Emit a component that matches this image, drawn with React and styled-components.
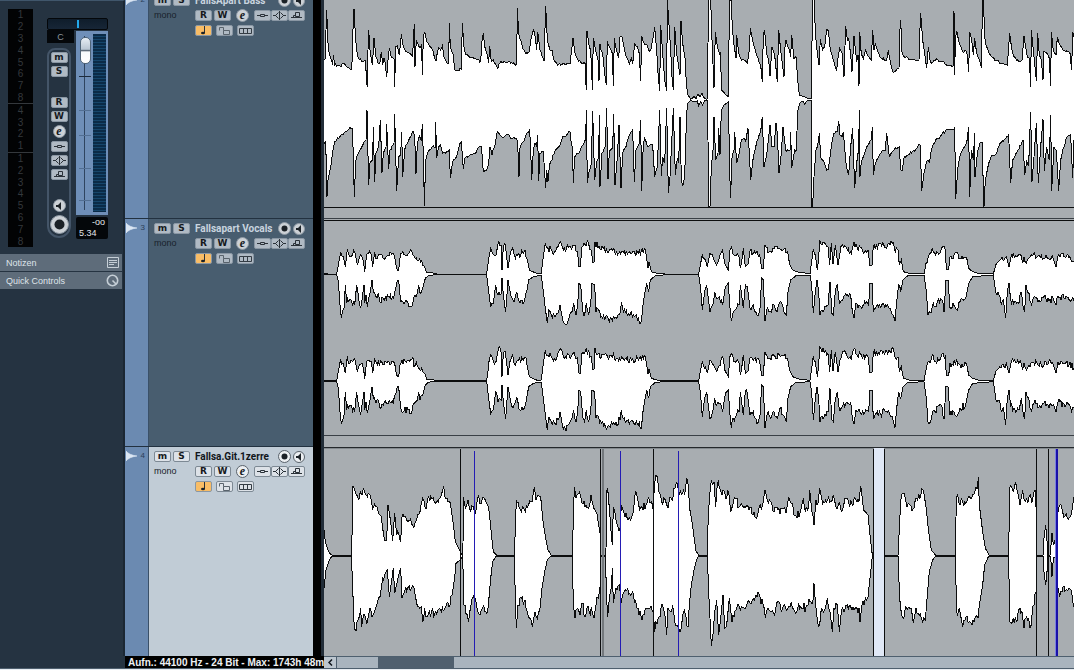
import React from "react";
import styled, { createGlobalStyle, css } from "styled-components";

const GlobalStyle = createGlobalStyle`
  * {
    box-sizing: border-box;
  }
  html, body, #root {
    height: 100%;
  }
  body {
    margin: 0;
    background: #e8edf2;
    font-family: "Liberation Sans", Arial, sans-serif;
    overflow: hidden;
  }
`;

const Window = styled.div`
  display: flex;
  flex-direction: column;
  height: 100vh;
  padding-bottom: 1px;
`;

const Workspace = styled.div`
  flex: 1;
  min-height: 0;
  display: flex;
`;

/* inspector */

const Inspector = styled.aside`
  flex: none;
  width: 125px;
  background: #253341;
  border-top: 1px solid #40566b;
  border-right: 2px solid #1b2733;
`;

const ChannelStrip = styled.section`
  display: flex;
  align-items: flex-start;
  height: 253px;
  padding: 8px 15px 0 8px;
  gap: 14px;
`;

const LevelScale = styled.div`
  width: 25px;
  height: 238px;
  background: #020304;
  display: flex;
  flex-direction: column;
`;

const ScaleGroup = styled.div`
  flex: ${(props) => props.$marks} 0 0;
  display: flex;
  flex-direction: column;
  justify-content: space-around;
  color: #34383c;
  font-size: 10px;
  line-height: 11px;
  text-align: center;

  & + & {
    border-top: 1px solid #34383c;
  }
`;

const StripBody = styled.div`
  flex: 1;
  padding-top: 9px;
`;

const Pan = styled.div`
  display: flex;
  justify-content: center;
  height: 12px;
  padding: 1px;
  background: linear-gradient(#0f1d2b, #172637);
  border: 1px solid #04070a;
  border-radius: 2px;
`;

const PanMark = styled.div`
  width: 2px;
  background: #22a8ea;
`;

const PanValue = styled.div`
  width: 27px;
  height: 13px;
  margin-bottom: 5px;
  background: #04070a;
  color: #8a939c;
  font-size: 9px;
  line-height: 14px;
  text-align: center;
`;

const StripColumns = styled.div`
  display: grid;
  grid-template-columns: 24px 32px;
  justify-content: space-between;
`;

const StripButtons = styled.div`
  display: flex;
  flex-direction: column;
  align-items: center;
  gap: 3px;
  height: 190px;
  padding: 2px 0;
  border: 2px solid #445568;
  border-radius: 8px 8px 12px 12px;
`;

const Spacer = styled.div`
  flex: 1;
`;

const FaderColumn = styled.div`
  margin-top: -17px;
`;

const FaderBox = styled.div`
  display: flex;
  justify-content: space-between;
  height: 184px;
  padding: 3px 2px 3px 3px;
  background: #6f8fb8;
  margin-bottom: 2px;
`;

const Fader = styled.input`
  appearance: none;
  writing-mode: vertical-lr;
  direction: rtl;
  width: 12px;
  height: 174px;
  margin: 2px 0 0;
  background:
    linear-gradient(#1d2b3b, #1d2b3b) 0 40px / 12px 1px no-repeat,
    linear-gradient(#526f93, #526f93) 0 74px / 12px 1px no-repeat,
    linear-gradient(#526f93, #526f93) 0 99px / 12px 1px no-repeat,
    linear-gradient(#526f93, #526f93) 0 132px / 12px 1px no-repeat,
    linear-gradient(#526f93, #526f93) 0 164px / 12px 1px no-repeat,
    linear-gradient(#2f4560, #2f4560) 5px 0 / 1px 100% no-repeat;

  &::-webkit-slider-thumb {
    appearance: none;
    width: 11px;
    height: 27px;
    border: 1px solid #4f6478;
    border-radius: 5px;
    background: linear-gradient(#e6edf4, #b9c6d3 45%, #5c6b7a 50%, #f6fafd 56%, #fff);
  }
`;

const Meter = styled.div`
  width: 13px;
  height: 178px;
  background: repeating-linear-gradient(#0b2b47 0 2px, #16466b 2px 3px);
`;

const Readout = styled.div`
  height: 22px;
  padding: 0 3px;
  background: #04070a;
  border-radius: 2px;
  color: #e3e6e9;
  font-size: 9px;
  line-height: 11px;
`;

const Peak = styled.div`
  text-align: right;
`;

const SectionButton = styled.button`
  display: flex;
  align-items: center;
  justify-content: space-between;
  width: 122px;
  height: 17px;
  margin-bottom: 1px;
  padding: 0 3px 0 6px;
  border: 0;
  background: #5e6c7a;
  color: #dfe5ea;
  font: 9px "Liberation Sans", Arial, sans-serif;
`;

/* small channel buttons */

const KeyButton = styled.button`
  flex: none;
  display: flex;
  align-items: center;
  justify-content: center;
  width: 17px;
  height: 11px;
  padding: 0;
  border: 1px solid ${(props) => (props.$bright ? "#7d8994" : "#8a97a4")};
  border-radius: 2px;
  background: ${(props) =>
    props.$on ? "#f9bd66" : props.$bright ? "#dde2e8" : "#b0bac4"};
  color: #15191d;
  font: bold 9px/9px "DejaVu Sans", sans-serif;

  ${(props) =>
    props.$round &&
    css`
      width: ${props.$size}px;
      height: ${props.$size}px;
      border-radius: 50%;
      background: ${props.$bright ? "#eceff2" : "#ccd1d6"};
      border-color: ${props.$bright ? "#59626b" : "#8f9aa5"};
      font: italic bold 12px/10px "Liberation Serif", serif;
    `}
`;

/* track list */

const TrackList = styled.div`
  flex: none;
  width: 199px;
  overflow: hidden;
  background: #000;
  border-right: 3px solid #222d38;
  padding-right: 8px;
`;

const Scrolled = styled.div`
  margin-top: -10px;
`;

const TrackRow = styled.div`
  display: flex;
  height: 228px;
  border-top: 1px solid #223140;
`;

const TrackTab = styled.div`
  flex: none;
  display: flex;
  align-items: flex-start;
  justify-content: space-between;
  width: 24px;
  padding: 4px 3px 0 1px;
  background: #6b8ab1;
  border-right: 1px solid #3a5068;
  color: #2b4059;
  font-size: 8px;
  line-height: 10px;
`;

const TrackBody = styled.div`
  flex: 1;
  padding: 3px 8px 0 5px;
  background: ${(props) => (props.$selected ? "#c1ccd6" : "#485d6f")};
  color: ${(props) => (props.$selected ? "#11161b" : "#c9d4df")};
`;

const TrackLine = styled.div`
  display: grid;
  grid-template-columns: 17px 17px 1fr 13px 12px;
  column-gap: 2px;
  align-items: center;
  height: 12px;
  margin-bottom: 3px;
`;

const TrackName = styled.span`
  padding-left: 3px;
  font: bold 10px/12px Roboto, sans-serif;
  white-space: nowrap;
`;

const ControlLine = styled.div`
  display: flex;
  align-items: center;
  gap: ${(props) => props.$gap}px;
  height: 12px;
  margin-bottom: 3px;
  padding-left: ${(props) => (props.$indent ? 41 : 0)}px;
`;

const ChannelMode = styled.span`
  width: 39px;
  color: #18222c;
  font-size: 9px;
  line-height: 14px;
`;

const EditKeys = styled.div`
  flex: 1;
  display: flex;
  justify-content: center;
`;

const JoinedKeys = styled.div`
  display: flex;
`;

/* arrangement */

const Arrangement = styled.main`
  flex: 1;
  min-width: 0;
  overflow: hidden;
  background: #a8adb1;
`;

const Lane = styled.svg`
  display: block;
  width: 750px;
  height: 228px;
`;

/* footer */

const Footer = styled.footer`
  flex: none;
  display: flex;
  height: 13px;
  border-bottom: 1px solid #4e5f6e;
  background: #253341;
`;

const StatusText = styled.div`
  flex: none;
  width: 199px;
  margin-left: 125px;
  padding-left: 3px;
  overflow: hidden;
  background: #000;
  color: #eef1f4;
  font: bold 10px/13px "Liberation Sans", Arial, sans-serif;
  white-space: nowrap;
`;

const Scrollbar = styled.div`
  flex: 1;
  display: flex;
  border-top: 1px solid #4e5f6e;
  background: #a9b4be;
`;

const ScrollArrow = styled.button`
  display: flex;
  align-items: center;
  justify-content: center;
  width: 13px;
  margin-right: 41px;
  padding: 0;
  border: 0;
  border-right: 1px solid #4e5f6e;
  background: #bcc6cf;
`;

const ScrollThumb = styled.div`
  width: 76px;
  background: #50606f;
`;

/* icons */

const Icon = ({ size = 13, height = 9, children }) => (
  <svg
    width={size}
    height={height}
    viewBox={`0 0 ${size} ${height}`}
    fill="none"
    stroke="#2a3138"
    strokeWidth="1"
    aria-hidden="true"
  >
    {children}
  </svg>
);

const InsertIcon = () => (
  <Icon>
    <path d="M1 4.500h3M9 4.500h3M4.500 3.500h4v2h-4z" />
  </Icon>
);

const EqIcon = () => (
  <Icon>
    <path d="M0 4.500h3M10 4.500h3M5.500 1.500l-3 3 3 3M7.500 1.500l3 3-3 3M6.500 0v9" />
  </Icon>
);

const SendIcon = () => (
  <Icon>
    <path d="M1 6.500h11M3.500 6.500v-2h2M5.500 5.500v-4h4v4z" />
  </Icon>
);

const NoteIcon = () => (
  <Icon>
    <path d="M7.500 0v7" />
    <ellipse cx="6" cy="7" rx="2" ry="1.300" fill="#1b2126" stroke="none" />
  </Icon>
);

const LockIcon = () => (
  <Icon>
    <path d="M5.500 4.500h6v4h-6zM5.500 4.500v-3h-4v3" stroke="#59636c" />
  </Icon>
);

const LanesIcon = () => (
  <Icon>
    <path d="M.5 2.500h12v5H.5zM4.500 2.500v5M8.500 2.500v5" stroke="#343c44" />
  </Icon>
);

const RecordIcon = ({ size = 9, r = 3 }) => (
  <Icon size={size} height={size}>
    <circle cx={size / 2} cy={size / 2} r={r} fill="#1b2126" stroke="none" />
  </Icon>
);

const SpeakerIcon = () => (
  <Icon size={8} height={8}>
    <path d="M1 3h2l3-3v8L3 5H1z" fill="#1b2126" stroke="none" />
  </Icon>
);

const NotesIcon = () => (
  <svg width="12" height="11" viewBox="0 0 12 11" fill="none" stroke="#c5ced6" aria-hidden="true">
    <path d="M.5 .5h11v10H.5zM2 3.500h8M2 5.500h8M2 7.500h5" />
  </svg>
);

const KnobIcon = () => (
  <svg width="13" height="13" viewBox="0 0 13 13" fill="none" stroke="#c5ced6" aria-hidden="true">
    <circle cx="6.500" cy="6.500" r="5.200" strokeWidth="1.600" />
    <path d="M6.500 6.500l3.500 3.500" strokeWidth="1.600" />
  </svg>
);

// Envelope points are "x,y" pairs, three units per pixel.
// Each take has an upper and a lower edge.
const SECOND_HALF = 1122;

const bass = [
  {
    x: 0,
    top: "12,180 17,175 18,90 20,30 24,130 27,155 32,175 38,195 40,165 44,195 60,198 70,192 80,200 95,207 98,150 100,30 103,28 106,110 112,165 118,178 130,185 137,182 139,240 142,262 144,150 146,90 150,150 157,195 160,150 162,115 168,170 174,190 180,185 184,155 188,195 192,175 196,190 200,232 204,180 208,145 214,172 222,175 224,262 227,140 232,138 238,165 244,103 250,140 258,155 268,160 278,170 280,120 283,73 285,200 289,120 298,142 305,135 307,225 310,110 314,95 320,125 330,140 340,155 348,182 356,143 362,150 367,138 372,170 380,188 386,190 388,68 391,140 400,165 404,210 414,212 424,207 427,68 432,140 438,165 450,172 470,178 482,182 487,110 490,103 496,150 502,165 506,190 509,138 514,185 520,180 528,195 534,205 540,188 560,186 575,187 590,192 592,25 596,100 602,120 608,145 618,160 628,155 632,120 641,90 646,112 650,150 653,95 660,150 672,183 674,120 677,17 682,120 690,150 696,150 702,180 710,190 722,195 736,193 750,192 756,140 759,115 766,165 776,183 786,192 795,190 797,240 799,270 801,92 806,130 812,150 816,240 817,270 820,113 826,145 834,180 837,242 840,133 848,160 854,220 859,255 862,122 870,145 877,160 880,258 883,113 890,150 896,175 900,112 906,110 914,150 922,175 928,193 934,175 938,193 944,128 952,140 958,160 962,243 965,108 972,130 980,132 986,150 992,152 998,118 1004,82 1010,150 1014,220 1019,273 1022,75 1028,160 1034,240 1040,272 1042,0 1048,90 1052,150 1056,230 1060,270 1064,80 1070,160 1080,225 1083,63 1088,130 1096,180 1099,255 1104,285 1112,298 1116,296 1122,290",
    bottom: "12,430 17,425 19,500 21,590 24,540 34,490 38,455 44,425 60,410 75,395 90,382 96,385 99,440 103,590 107,485 118,455 130,432 138,420 141,330 146,555 150,490 158,480 160,380 164,545 168,460 176,440 181,360 186,518 190,460 198,440 200,372 206,508 210,450 222,430 224,343 230,572 236,470 242,465 245,395 248,530 254,450 262,430 272,410 279,392 284,408 288,522 292,430 298,405 304,420 307,372 311,500 313,617 317,480 328,450 340,437 345,445 347,365 350,475 356,440 362,435 368,460 380,455 388,450 391,535 398,485 410,470 416,445 424,425 430,508 434,475 450,465 465,462 478,440 485,440 488,500 492,515 500,510 506,490 510,440 516,465 524,440 532,395 540,405 552,412 560,402 575,415 590,415 593,430 597,530 600,445 610,425 620,400 629,388 632,450 635,540 640,450 645,430 650,440 653,405 656,543 660,460 670,455 677,565 680,510 684,545 688,500 696,480 706,450 718,440 728,410 740,405 750,395 754,430 757,440 760,548 764,470 776,460 788,435 797,420 799,330 802,550 808,510 814,490 818,332 824,540 830,485 836,470 838,345 840,560 846,460 856,440 860,325 864,538 868,455 878,445 881,342 885,555 892,470 897,375 903,565 908,460 918,440 926,410 934,395 938,390 943,545 948,450 958,430 962,360 965,572 970,430 974,415 984,440 998,435 1004,530 1012,500 1019,330 1024,528 1028,470 1034,490 1040,325 1045,578 1050,530 1054,450 1060,325 1066,525 1072,475 1076,490 1080,350 1084,540 1088,558 1094,530 1099,370 1102,310 1112,302 1122,304",
  },
  {
    x: SECOND_HALF,
    top: "0,290 6,296 12,282 18,290 24,278 28,292 38,298 41,296 42,130 44,0 50,0 54,120 60,265 64,95 70,140 78,165 80,155 82,270 90,278 96,285 104,290 105,120 107,0 111,0 114,60 118,120 126,175 128,105 134,160 140,175 150,180 160,190 166,150 169,85 176,120 184,150 192,175 200,195 205,245 208,100 212,93 218,160 224,180 228,228 234,140 242,165 250,245 254,90 260,150 270,230 272,150 276,120 286,150 290,170 293,105 300,175 306,170 312,250 316,285 330,290 345,296 353,296 355,-30 360,-30 364,100 370,160 375,195 379,118 386,150 392,140 398,88 403,92 408,140 418,180 428,210 433,165 437,145 444,160 450,230 455,78 460,120 464,115 470,165 474,215 480,108 488,185 492,165 495,258 497,95 502,165 508,175 515,150 524,170 532,180 536,90 540,150 544,130 552,155 562,175 578,182 583,150 590,190 598,218 608,208 615,205 617,100 620,60 624,155 632,172 650,178 675,180 677,110 680,40 686,120 692,160 698,205 703,140 708,180 714,190 725,180 745,185 765,195 778,198 780,33 782,225 784,120 788,92 796,130 806,155 815,150 820,165 824,215 827,95 833,120 838,165 842,115 848,160 856,180 863,205 865,-20 869,20 872,110 880,145 890,165 905,180 925,192 940,195 947,100 953,145 960,170 975,185 984,180 990,108 998,160 1006,175 1010,262 1012,90 1018,150 1027,242 1031,100 1036,165 1042,180 1047,240 1049,155 1060,160 1066,175 1070,258 1072,95 1078,155 1086,165 1090,112 1100,140 1115,155 1128,160 1133,210 1136,95 1140,110",
    bottom: "0,305 10,303 14,318 20,305 26,315 32,302 41,300 42,420 45,618 48,618 52,500 58,440 60,350 65,480 72,460 74,385 78,465 82,330 90,315 104,305 106,490 110,595 113,480 120,450 122,395 128,490 134,470 142,420 150,415 155,425 162,385 170,540 178,470 190,420 200,395 205,350 210,500 218,465 228,375 234,440 240,440 246,370 250,400 255,520 262,460 267,380 275,450 288,450 290,395 293,505 302,450 306,455 312,330 318,308 326,303 332,312 338,303 353,300 354,618 356,618 360,530 366,450 372,430 376,400 380,470 390,485 398,510 403,508 412,440 420,400 430,395 434,362 438,405 444,410 448,395 456,490 464,525 470,440 476,385 482,565 488,490 494,450 496,330 498,530 502,485 512,460 522,435 532,420 535,380 538,525 544,490 560,460 574,450 578,398 586,470 600,450 616,440 620,510 624,512 630,475 640,465 655,455 668,445 679,435 683,572 690,520 700,480 706,490 712,450 725,420 740,408 755,392 770,387 779,390 782,382 785,598 792,500 800,460 812,440 818,430 824,380 827,592 832,450 838,480 842,400 843,532 850,460 858,430 866,428 868,618 870,618 874,540 884,490 895,465 908,460 918,430 935,415 944,405 950,550 956,480 972,450 987,420 992,525 998,485 1004,495 1010,335 1014,545 1020,470 1027,370 1033,550 1040,440 1047,358 1051,512 1058,440 1066,480 1070,345 1073,572 1080,440 1087,450 1094,572 1100,480 1110,440 1120,410 1130,405 1136,535 1140,420",
  },
];

const vocals = [
  {
    x: 0,
    top: "12,146 18,146 24,147 50,147 55,120 62,82 70,95 76,125 82,73 90,95 98,90 104,80 112,120 118,100 126,95 131,112 134,142 138,105 146,85 154,88 158,125 164,82 172,100 182,88 192,100 204,90 216,88 224,95 228,120 232,135 236,135 240,100 246,85 256,90 266,85 276,82 286,100 296,108 305,108 308,120 314,125 320,143 332,142 350,147 500,147 505,110 512,70 520,88 528,90 536,47 543,60 546,135 550,65 556,60 564,130 570,90 578,68 586,100 596,85 610,85 615,75 622,105 628,135 638,140 652,146 664,145 668,110 676,55 684,70 694,75 704,80 714,65 722,50 730,75 745,68 755,72 762,62 772,78 777,125 781,125 786,65 796,60 806,55 814,75 818,112 822,112 825,50 834,68 850,70 866,82 874,72 890,80 910,82 935,85 955,85 976,75 980,100 984,128 987,112 994,140 1010,145 1036,147 1122,147",
    bottom: "12,149 50,149 55,170 60,240 64,278 72,250 76,180 80,235 92,222 104,240 110,180 116,220 122,250 128,210 132,180 134,235 138,210 142,245 150,205 156,165 160,200 168,215 175,205 180,230 190,220 205,215 220,218 228,185 232,165 236,165 242,230 252,238 264,235 275,245 282,215 292,205 296,180 300,205 308,190 316,160 325,152 345,149 500,149 506,200 512,245 520,235 527,180 534,210 544,205 546,160 550,210 557,262 564,165 572,210 580,228 590,200 600,235 614,228 620,200 626,165 640,155 652,153 664,152 670,200 676,250 682,295 686,255 694,270 705,275 714,265 720,240 728,285 738,298 748,275 756,260 761,235 768,270 773,240 777,175 782,180 788,255 794,270 799,235 806,270 812,240 816,175 824,180 828,260 836,255 845,275 865,282 885,280 900,265 904,235 910,260 925,265 940,270 955,280 964,290 970,230 980,175 986,200 991,165 1005,153 1036,149 1122,149",
  },
  {
    x: SECOND_HALF,
    top: "0,147 14,147 20,115 25,88 34,105 40,125 48,85 58,100 68,120 76,100 86,75 92,115 103,135 108,75 113,65 120,90 130,85 135,95 139,130 143,110 148,70 154,125 162,118 168,78 178,85 190,80 197,90 203,130 208,130 213,60 222,82 240,72 256,70 270,72 280,80 286,115 296,135 315,142 348,146 353,110 358,72 364,90 370,135 374,100 377,45 384,60 395,58 402,65 407,120 412,55 417,118 424,60 432,120 438,85 446,60 460,75 472,85 480,52 490,70 500,68 512,80 522,75 528,122 534,122 538,62 550,70 560,55 572,68 585,55 598,52 604,80 612,75 616,120 622,105 628,140 645,145 690,147 696,115 705,90 715,68 725,90 735,88 740,80 748,65 754,75 757,132 764,132 768,95 778,100 788,82 798,100 818,98 824,130 836,140 855,146 898,147 906,118 918,105 930,105 937,95 945,125 952,90 965,92 980,88 986,115 990,95 997,115 1005,100 1016,92 1030,95 1050,100 1075,92 1086,125 1092,92 1110,95 1125,100 1140,108",
    bottom: "0,149 14,149 20,190 25,255 30,215 38,180 48,262 56,240 62,200 68,220 76,215 86,240 94,185 103,175 107,240 112,288 118,260 128,250 135,240 139,180 148,250 154,180 160,185 168,250 178,240 186,262 193,272 198,250 203,160 208,165 213,288 220,245 230,260 240,240 250,260 258,230 268,250 277,270 282,200 290,165 305,153 348,150 353,180 358,265 364,200 369,165 374,200 378,270 390,255 402,240 408,170 414,265 418,270 424,200 430,180 436,235 446,225 458,212 470,210 475,260 480,278 486,235 500,245 515,235 524,240 528,175 534,175 538,260 550,240 560,248 575,240 588,250 598,270 603,288 608,230 614,180 620,200 627,165 640,153 690,150 697,200 702,270 712,262 718,235 726,245 734,222 744,225 750,262 756,165 762,165 768,250 780,242 788,255 798,230 815,220 824,175 836,155 898,150 906,205 918,215 922,240 928,225 935,280 940,200 945,175 950,225 962,230 975,235 982,200 988,250 992,262 996,180 1005,205 1013,240 1020,215 1035,225 1050,215 1065,228 1078,220 1086,240 1092,212 1110,218 1130,228 1140,228",
  },
];

const guitar = [
  {
    x: 0,
    top: "12,255 16,290 24,315 30,326 38,331 94,331 97,240 99,125 106,140 112,152 124,148 134,140 142,155 150,150 158,190 168,185 176,205 184,215 188,250 192,275 200,285 204,180 212,230 218,288 224,205 230,270 236,265 242,290 246,215 256,215 266,228 278,240 290,225 300,200 308,160 316,190 326,155 340,158 355,170 365,145 371,122 378,160 388,170 394,195 400,235 406,290 416,310 426,331 429,300 430,155 436,190 444,165 452,200 460,185 464,205 470,175 476,150 484,175 494,160 502,180 508,205 514,265 520,320 530,331 583,331 586,250 589,165 598,190 608,185 616,200 626,180 636,170 643,125 648,165 654,150 662,155 668,220 676,275 684,315 694,331 757,331 760,220 763,125 768,160 776,145 786,175 798,180 806,190 813,150 820,185 828,200 836,240 841,270 841,331 856,331 858,310 861,135 863,130 868,190 874,270 877,300 880,185 886,210 894,245 900,250 904,180 912,205 922,222 932,225 940,200 946,140 956,180 966,185 978,180 986,155 994,170 1000,200 1003,120 1008,90 1014,115 1022,150 1028,180 1036,165 1044,190 1050,155 1058,165 1062,130 1070,110 1078,150 1088,145 1094,150 1100,100 1106,130 1108,185 1116,230 1122,275",
    bottom: "12,430 18,375 28,345 36,333 94,333 98,420 101,520 108,557 116,520 122,490 125,545 134,510 140,538 150,490 156,515 164,500 170,480 180,455 188,400 194,390 202,375 208,455 220,370 224,445 234,400 242,368 246,460 254,440 265,425 282,428 290,475 304,485 308,530 314,490 322,515 335,500 350,510 358,490 375,490 390,480 396,450 404,400 408,355 420,345 428,333 432,480 438,505 446,530 452,490 458,460 464,455 470,485 480,510 488,490 500,505 506,470 512,400 518,350 528,333 583,333 586,460 589,550 594,480 604,460 615,465 622,500 630,520 637,545 645,500 652,520 660,490 666,430 674,380 682,345 692,333 757,333 760,480 765,520 772,490 780,510 786,475 795,515 802,485 808,505 814,485 822,520 828,480 835,460 841,420 841,333 856,333 860,460 863,515 868,460 874,430 877,370 880,475 888,430 898,420 904,475 912,440 920,437 938,437 944,470 954,490 966,525 976,490 990,490 1000,500 1004,560 1008,530 1018,515 1028,480 1034,500 1040,570 1044,490 1052,500 1058,480 1066,540 1075,540 1082,560 1090,500 1098,515 1104,545 1108,480 1114,420 1122,375",
  },
  {
    x: SECOND_HALF,
    top: "0,275 6,318 14,331 40,331 42,240 46,160 52,105 60,110 65,185 70,115 76,130 84,150 92,140 98,160 104,140 110,200 118,175 126,160 136,185 150,190 165,195 180,200 188,220 196,185 206,180 213,135 220,165 230,170 240,200 252,195 266,190 276,205 284,155 294,175 300,210 318,205 328,160 334,200 344,185 347,135 354,200 360,240 366,165 372,175 377,130 386,175 395,165 410,170 418,150 426,185 436,170 446,195 453,160 464,170 475,180 486,165 495,170 500,122 506,170 514,200 522,210 528,270 535,331 612,331 616,250 620,170 628,145 636,170 648,180 658,190 668,160 680,155 688,135 696,185 704,260 712,315 725,331 784,331 787,160 790,150 796,180 806,170 816,175 830,160 842,145 850,130 853,97 856,180 866,260 874,310 886,331 944,331 947,130 956,135 965,110 970,140 978,180 986,135 992,165 1004,160 1016,165 1023,135 1027,200 1027,331 1047,331 1050,280 1055,240 1060,300 1062,331 1068,331 1071,300 1074,265 1078,300 1084,300 1090,331 1092,200 1098,180 1106,200 1114,213 1130,213 1136,180 1140,155",
    bottom: "0,375 8,345 14,333 40,333 44,440 48,520 52,603 58,560 62,500 68,465 74,570 80,520 87,450 92,550 98,540 106,460 114,530 126,495 136,485 148,488 160,475 175,465 186,450 198,455 208,480 214,520 222,490 232,500 242,510 252,470 262,500 272,480 282,490 292,470 302,500 314,475 324,490 336,485 348,470 358,460 360,415 364,470 370,525 377,540 382,490 392,495 400,460 408,500 415,560 420,490 430,480 436,560 442,500 450,500 460,480 474,495 486,490 495,490 498,530 504,480 514,460 522,455 528,400 535,333 612,333 617,460 622,505 628,520 634,485 645,485 652,490 658,535 666,490 676,510 686,530 694,525 700,450 706,380 716,345 725,333 784,333 788,500 796,490 806,545 816,515 826,530 834,540 844,515 852,520 856,480 866,420 872,360 884,333 944,333 947,530 958,520 970,525 978,490 984,500 990,550 998,515 1004,520 1008,550 1014,510 1020,480 1022,450 1027,440 1027,333 1047,333 1050,380 1055,420 1060,370 1062,333 1068,333 1071,350 1074,395 1078,340 1086,333 1092,430 1097,455 1104,440 1118,433 1132,435 1138,480 1140,485",
  },
];

const parsePoints = (text) => text.split(" ").map((pair) => pair.split(",").map(Number));

// Adds fine ripple between the points of a loud passage, leaves silence flat.
const addRipple = (points, center, grain, seed) => {
  const out = [];
  points.forEach(([x, y], i) => {
    out.push(`${x},${y}`);
    const next = points[i + 1];
    if (!next || !grain) return;
    const loud = Math.abs(y - center) > 30 && Math.abs(next[1] - center) > 30;
    const steps = Math.floor((next[0] - x) / 3);
    if (!loud || steps < 2 || Math.abs(next[1] - y) > 40) return;
    for (let s = 1; s < steps; s++) {
      const nx = x + s * 3;
      const ny = y + ((next[1] - y) * s) / steps;
      const wave = Math.sin(nx * 12.9898 + seed * 78.233) * 43758.5453;
      out.push(`${nx},${Math.round(ny + (wave - Math.floor(wave) - 0.5) * grain)}`);
    }
  });
  return out;
};

const Waveform = ({ takes, center, grain, dy = 0, seed = 1 }) => (
  <g>
    {takes.map((take) => {
      const top = addRipple(parsePoints(take.top), center, grain, seed);
      const bottom = addRipple(parsePoints(take.bottom), center, grain, seed + 1);
      return (
        <g key={take.x} transform={`translate(${take.x} ${dy})`}>
          <polygon points={[...top, ...[...bottom].reverse()].join(" ")} fill="#fff" />
          <g fill="none" stroke="#0c0d0e" shapeRendering="crispEdges">
            <polyline points={top.join(" ")} vectorEffect="non-scaling-stroke" />
            <polyline points={bottom.join(" ")} vectorEffect="non-scaling-stroke" />
          </g>
        </g>
      );
    })}
  </g>
);

const Bar = ({ x, y = 12, w = 3, h = 621, color = "#0c0d0e" }) => (
  <rect x={x} y={y} width={w} height={h} fill={color} />
);

const BassLane = () => (
  <Lane viewBox="12 -30 2250 684" role="img" aria-label="Bass waveform">
    <Waveform takes={bass} center={298} grain={8} />
    <Bar x={12} y={621} w={2250} h={3} />
  </Lane>
);

const VocalsLane = () => (
  <Lane viewBox="12 -21 2250 684" role="img" aria-label="Vocals waveform">
    <Bar x={12} y={-21} w={2250} h={3} color="#3a4046" />
    <Bar x={12} y={-15} w={2250} h={3} />
    <Waveform takes={vocals} center={148} grain={20} />
    <Waveform takes={vocals} center={148} grain={22} dy={320} seed={5} />
    <Bar x={12} y={630} w={2250} h={3} color="#3a4046" />
  </Lane>
);

const cuts = [420, 840, 999, 1659, 1692, 2148, 2184];
const hitpoints = [462, 900, 1074];

const GuitarLane = () => (
  <Lane viewBox="12 3 2250 684" role="img" aria-label="Guitar waveform">
    <Bar x={12} y={6} w={2250} h={3} color="#24282c" />
    <Bar x={12} y={9} w={2250} h={3} color="#83898e" />
    <Waveform takes={guitar} center={332} grain={28} />
    <Bar x={1662} y={9} w={30} h={624} color="#e0e8f6" />
    <Bar x={846} w={6} color="#73787c" />
    {cuts.map((x) => (
      <Bar key={x} x={x} />
    ))}
    {hitpoints.map((x) => (
      <Bar key={x} x={x} y={18} h={615} color="#241cb4" />
    ))}
    <Bar x={2205} color="#7a80e0" />
    <Bar x={2208} w={6} color="#1a12a8" />
  </Lane>
);

const TrackHeader = ({ number, name, selected }) => (
  <TrackRow>
    <TrackTab>
      <svg width="12" height="10" viewBox="0 0 12 10" aria-hidden="true">
        <path d="M0 0q3 4 11 5Q3 6 0 10z" fill="#dbe6f3" stroke="#dbe6f3" strokeWidth=".6" />
      </svg>
      {number}
    </TrackTab>
    <TrackBody $selected={selected}>
      <TrackLine>
        <KeyButton $bright={selected} aria-label="Mute">m</KeyButton>
        <KeyButton $bright={selected} aria-label="Solo">S</KeyButton>
        <TrackName>{name}</TrackName>
        <KeyButton $round $size={13} $bright={selected} aria-label="Record enable">
          <RecordIcon />
        </KeyButton>
        <KeyButton $round $size={12} $bright={selected} aria-label="Monitor">
          <SpeakerIcon />
        </KeyButton>
      </TrackLine>
      <ControlLine $gap={2}>
        <ChannelMode>mono</ChannelMode>
        <KeyButton $bright={selected} aria-label="Read automation">R</KeyButton>
        <KeyButton $bright={selected} aria-label="Write automation">W</KeyButton>
        <EditKeys>
          <KeyButton $round $size={13} $bright={selected} aria-label="Edit channel">e</KeyButton>
        </EditKeys>
        <JoinedKeys>
          <KeyButton $bright={selected} aria-label="Inserts"><InsertIcon /></KeyButton>
          <KeyButton $bright={selected} aria-label="Equalizer"><EqIcon /></KeyButton>
          <KeyButton $bright={selected} aria-label="Sends"><SendIcon /></KeyButton>
        </JoinedKeys>
      </ControlLine>
      <ControlLine $gap={4} $indent>
        <KeyButton $on aria-label="Musical mode"><NoteIcon /></KeyButton>
        <KeyButton $bright={selected} aria-label="Lock"><LockIcon /></KeyButton>
        <KeyButton $bright={selected} aria-label="Lanes"><LanesIcon /></KeyButton>
      </ControlLine>
    </TrackBody>
  </TrackRow>
);

const scaleGroups = [
  [1, 2, 3, 4, 5, 6, 7, 8],
  [4, 3, 2, 1],
  [1, 2, 3, 4, 5, 6, 7, 8],
];

const tracks = [
  { number: 2, name: "FallsApart Bass" },
  { number: 3, name: "Fallsapart Vocals" },
  { number: 4, name: "Fallsa.Git.1zerre", selected: true },
];

const Channel = () => (
  <ChannelStrip>
    <LevelScale>
      {scaleGroups.map((group, i) => (
        <ScaleGroup key={i} $marks={group.length}>
          {group.map((value) => (
            <div key={value}>{value}</div>
          ))}
        </ScaleGroup>
      ))}
    </LevelScale>
    <StripBody>
      <Pan>
        <PanMark />
      </Pan>
      <PanValue>C</PanValue>
      <StripColumns>
        <StripButtons>
          <KeyButton aria-label="Mute">m</KeyButton>
          <KeyButton aria-label="Solo">S</KeyButton>
          <Spacer />
          <KeyButton aria-label="Read automation">R</KeyButton>
          <KeyButton aria-label="Write automation">W</KeyButton>
          <KeyButton $round $size={13} aria-label="Edit channel">e</KeyButton>
          <KeyButton aria-label="Inserts"><InsertIcon /></KeyButton>
          <KeyButton aria-label="Equalizer"><EqIcon /></KeyButton>
          <KeyButton aria-label="Sends"><SendIcon /></KeyButton>
          <Spacer />
          <KeyButton $round $size={13} aria-label="Monitor"><SpeakerIcon /></KeyButton>
          <KeyButton $round $size={19} aria-label="Record enable">
            <RecordIcon size={13} r={5} />
          </KeyButton>
        </StripButtons>
        <FaderColumn>
          <FaderBox>
            <Fader type="range" min="0" max="100" defaultValue="99" aria-label="Volume" />
            <Meter />
          </FaderBox>
          <Readout>
            <Peak>-oo</Peak>
            <div>5.34</div>
          </Readout>
        </FaderColumn>
      </StripColumns>
    </StripBody>
  </ChannelStrip>
);

const App = () => (
  <>
    <GlobalStyle />
    <Window>
      <Workspace>
        <Inspector>
          <Channel />
          <SectionButton>
            Notizen
            <NotesIcon />
          </SectionButton>
          <SectionButton>
            Quick Controls
            <KnobIcon />
          </SectionButton>
        </Inspector>
        <TrackList>
          <Scrolled>
            {tracks.map((track) => (
              <TrackHeader key={track.number} {...track} />
            ))}
          </Scrolled>
        </TrackList>
        <Arrangement>
          <Scrolled>
            <BassLane />
            <VocalsLane />
            <GuitarLane />
          </Scrolled>
        </Arrangement>
      </Workspace>
      <Footer>
        <StatusText>Aufn.: 44100 Hz - 24 Bit - Max: 1743h 48m</StatusText>
        <Scrollbar>
          <ScrollArrow aria-label="Scroll left">
            <svg width="5" height="7" viewBox="0 0 5 7" fill="none" stroke="#10161c" strokeWidth="1.500" aria-hidden="true">
              <path d="M4 .5l-3 3 3 3" />
            </svg>
          </ScrollArrow>
          <ScrollThumb />
        </Scrollbar>
      </Footer>
    </Window>
  </>
);

export default App;
